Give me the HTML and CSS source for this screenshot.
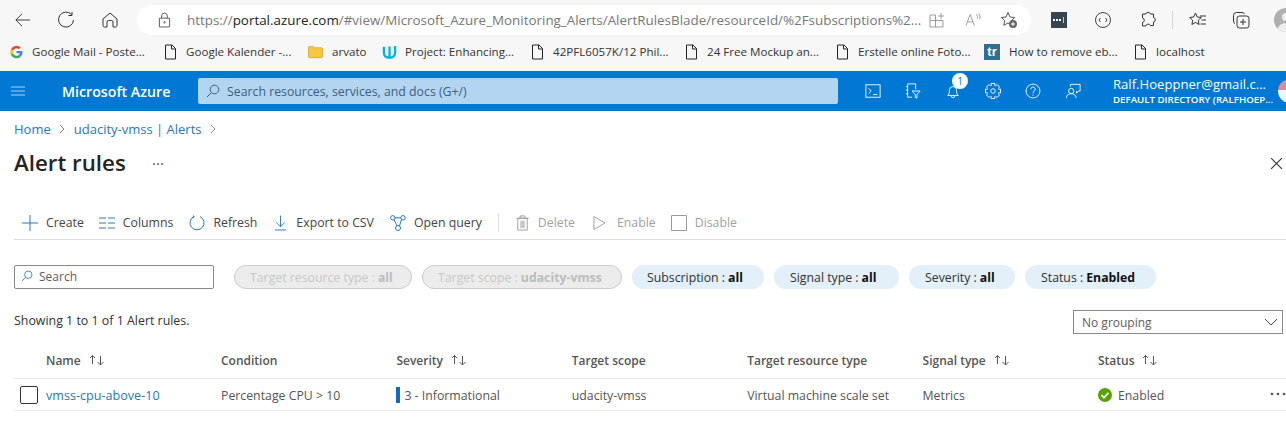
FILE: index.html
```html
<!DOCTYPE html>
<html lang="en">
<head>
<meta charset="utf-8">
<title>Alert rules</title>
<link rel="stylesheet" href="styles.css">
</head>
<body>
<div class="browser">
  <div class="navbar">
    <svg class="nav-ico back" viewBox="0 0 18 16"><path d="M17 8H2M8.500 1.500 2 8l6.500 6.500"/></svg>
    <svg class="nav-ico reload" viewBox="0 0 18 18"><path d="M14.500 3.500A7.500 7.500 0 1 0 16.500 9M15 1v3.500h-3.700"/></svg>
    <svg class="nav-ico home" viewBox="0 0 18 18"><path d="M2 8 9 2l7 6v6.500a1.500 1.500 0 0 1-1.500 1.500H12v-5a1.500 1.500 0 0 0-1.500-1.500h-3A1.500 1.500 0 0 0 6 11v5H3.500A1.500 1.500 0 0 1 2 14.500z"/></svg>
    <div class="addr">
      <svg class="nav-ico lock" viewBox="0 0 14 17"><path d="M1.500 6.500h11v9.500h-11zM4 6.500V4a3 3 0 0 1 6 0v2.500"/><circle cx="7" cy="11" r=".8"/></svg>
      <div class="url">https://<b>portal.azure.com</b>/#view/Microsoft_Azure_Monitoring_Alerts/AlertRulesBlade/resourceId/%2Fsubscriptions%2...</div>
      <svg class="nav-ico grey apps" viewBox="0 0 16 16"><path d="M1 3h5.500v5.500H1zM1 8.500h5.500V15H1zM6.500 8.500H14V15H6.500zM9 4h6M12 1v6"/></svg>
      <svg class="nav-ico grey read" viewBox="0 0 18 16"><path d="M1 14 5.500 2 10 14M2.700 10h5.600M12 2q2 2 1 4.500M14.500 1q2.500 3 1 6"/></svg>
      <svg class="nav-ico fav" viewBox="0 0 18 18"><path d="M8 1.500 10 6l4.700.5-3.500 3.200 1 4.600L8 12l-4.200 2.300 1-4.600L1.300 6.500 6 6z"/><circle class="solid" cx="13" cy="13" r="4"/><path class="wh" d="M13 11v4M11 13h4"/></svg>
    </div>
    <div class="tools">
      <div class="ext-dark"><i></i><i></i><i></i><u></u></div>
      <svg class="nav-ico code" viewBox="0 0 18 18"><circle cx="9" cy="9" r="7.500"/><path d="M6.500 7 5 9l1.500 2M11.500 7 13 9l-1.500 2"/></svg>
      <svg class="nav-ico puzzle" viewBox="0 0 18 18"><path d="M7 3a2.200 2.200 0 0 1 4.300 0h3.200v3.500a2.300 2.300 0 0 1 0 4.500v3.500h-3.300a2.300 2.300 0 0 0-4.400.500H3.500v-3.500a2.300 2.300 0 0 0 0-4.500V3z"/></svg>
      <span class="sep"></span>
      <svg class="nav-ico favs" viewBox="0 0 18 18"><path d="M6.500 2 8.300 6l4 .5-3 2.800.8 4.200-3.600-2.100-3.600 2.100.8-4.200-3-2.800 4-.5zM11 5h6M12.500 9H17M11.500 13H17"/></svg>
      <svg class="nav-ico coll" viewBox="0 0 18 18"><path d="M3 12.500Q1.500 12 1.500 10V4.500a3 3 0 0 1 3-3H10q2 0 2.500 1.500"/><rect x="5" y="5" width="12" height="12" rx="2.500"/><path d="M11 8v6M8 11h6"/></svg>
      <div class="avatar"><span class="head"></span><span class="torso"></span></div>
    </div>
  </div>
  <div class="bookmarks">
    <div class="bm"><svg class="bm-ico g" viewBox="0 0 48 48"><path fill="#ea4335" d="M24 10c3.400 0 6.400 1.200 8.800 3.400l6.500-6.500A23 23 0 0 0 3.500 13.600l7.600 5.900A14 14 0 0 1 24 10z"/><path fill="#4285f4" d="M46 24.500c0-1.600-.2-3.100-.4-4.500H24v9h12.400a10.600 10.600 0 0 1-4.600 7l7.400 5.700C43.500 37.700 46 31.700 46 24.500z"/><path fill="#fbbc05" d="M11.100 28.500a14 14 0 0 1 0-9l-7.600-5.900a23 23 0 0 0 0 20.800z"/><path fill="#34a853" d="M24 47c6.200 0 11.400-2 15.200-5.500L31.800 36a14 14 0 0 1-20.700-7.500l-7.600 5.900A23 23 0 0 0 24 47z"/></svg><span>Google Mail - Poste...</span></div>
    <div class="bm"><svg class="bm-ico page" viewBox="0 0 12 16"><path d="M1 1h6.500L11 4.500V15H1zM7 1v4h4"/></svg><span>Google Kalender -...</span></div>
    <div class="bm"><svg class="bm-ico" viewBox="0 0 16 14"><path fill="#f5c842" stroke="#c99a1c" stroke-width=".7" d="M.5 2a1 1 0 0 1 1-1h4l1.500 1.500h7.500a1 1 0 0 1 1 1V12a1 1 0 0 1-1 1h-13a1 1 0 0 1-1-1z"/></svg><span>arvato</span></div>
    <div class="bm"><svg class="bm-ico" viewBox="0 0 16 16"><path fill="none" stroke="#02b3e4" stroke-width="2.400" d="M2 2.500v6q0 5.500 6 5.500t6-5.500v-7M8 14V2"/></svg><span>Project: Enhancing...</span></div>
    <div class="bm"><svg class="bm-ico page" viewBox="0 0 12 16"><path d="M1 1h6.500L11 4.500V15H1zM7 1v4h4"/></svg><span>42PFL6057K/12 Phil...</span></div>
    <div class="bm"><svg class="bm-ico page" viewBox="0 0 12 16"><path d="M1 1h6.500L11 4.500V15H1zM7 1v4h4"/></svg><span>24 Free Mockup an...</span></div>
    <div class="bm"><svg class="bm-ico page" viewBox="0 0 12 16"><path d="M1 1h6.500L11 4.500V15H1zM7 1v4h4"/></svg><span>Erstelle online Foto...</span></div>
    <div class="bm"><span class="tr">tr</span><span>How to remove eb...</span></div>
    <div class="bm"><svg class="bm-ico page" viewBox="0 0 12 16"><path d="M1 1h6.500L11 4.500V15H1zM7 1v4h4"/></svg><span>localhost</span></div>
  </div>
</div>

<header class="azure">
  <svg class="burger" viewBox="0 0 14 10"><path d="M0 1h14M0 5h14M0 9h14"/></svg>
  <div class="brand">Microsoft Azure</div>
  <div class="global-search">
    <svg class="search-ico" viewBox="0 0 14 14"><circle cx="8.500" cy="5.500" r="4.300"/><path d="M5.500 8.500 1 13"/></svg>
    <span>Search resources, services, and docs (G+/)</span>
  </div>
  <div class="az-tools">
    <svg class="az-ico" viewBox="0 0 18 18"><rect x="1" y="2" width="16" height="14"/><path d="M4 6l3 3-3 3M9 13h5"/></svg>
    <svg class="az-ico" viewBox="0 0 18 18"><path d="M3 1h9v6M3 1v15h5M1 4h2M1 8h2M1 12h2M8 9h9l-3.500 4v4l-2-1v-3z"/></svg>
    <div class="bell"><svg class="az-ico" viewBox="0 0 18 18"><path d="M3 14h12q-2-1.500-2-4V8a4 4 0 0 0-8 0v2q0 2.500-2 4zM7 14.500a2 2 0 0 0 4 0"/></svg><span class="badge">1</span></div>
    <svg class="az-ico" viewBox="0 0 18 18"><rect x="7" y=".6" width="4" height="16.800"/><rect x="7" y=".6" width="4" height="16.800" transform="rotate(45 9 9)"/><rect x="7" y=".6" width="4" height="16.800" transform="rotate(90 9 9)"/><rect x="7" y=".6" width="4" height="16.800" transform="rotate(135 9 9)"/><circle class="gear" cx="9" cy="9" r="6.300"/><circle cx="9" cy="9" r="2.600"/></svg>
    <svg class="az-ico" viewBox="0 0 18 18"><circle cx="9" cy="9" r="7.800"/><path d="M6.500 7a2.500 2.500 0 1 1 3.500 2.300Q9 10 9 11.500M9 13v1.200"/></svg>
    <svg class="az-ico" viewBox="0 0 18 18"><circle cx="7" cy="9" r="3"/><path d="M1.500 17q.5-5 5.500-5t5.500 5M6 4V1.500h11V9h-2l-2 2.500V9"/></svg>
  </div>
  <div class="account">
    <div class="acc-name">Ralf.Hoeppner@gmail.c...</div>
    <div class="acc-dir">DEFAULT DIRECTORY (RALFHOEP...</div>
  </div>
  <div class="acc-pic"></div>
</header>

<main class="blade">
  <nav class="crumbs">
    <a>Home</a>
    <svg class="chev" viewBox="0 0 6 10"><path d="M1 1l4 4-4 4"/></svg>
    <a>udacity-vmss | Alerts</a>
    <svg class="chev" viewBox="0 0 6 10"><path d="M1 1l4 4-4 4"/></svg>
  </nav>
  <div class="title-row">
    <h1>Alert rules</h1>
    <span class="title-more">···</span>
    <svg class="close" viewBox="0 0 12 12"><path d="M1 1l10 10M11 1 1 11"/></svg>
  </div>
  <div class="toolbar">
    <div class="cmd c-create"><svg class="c-ico" viewBox="0 0 16 16"><path d="M8 0v16M0 8h16"/></svg><span>Create</span></div>
    <div class="cmd"><svg class="c-ico" viewBox="0 0 16 12"><path d="M0 1h7M9 1h7M0 6h7M9 6h7M0 11h7M9 11h7"/></svg><span>Columns</span></div>
    <div class="cmd c-refresh"><svg class="c-ico" viewBox="0 0 16 16"><path d="M5 1.500a7 7 0 1 0 6 0M4.500 .5 5.200 2 3 3"/></svg><span>Refresh</span></div>
    <div class="cmd nar"><svg class="c-ico" viewBox="0 0 14 16"><path d="M7 0v12M2.500 7.500 7 12l4.500-4.500M1 15.500h12"/></svg><span>Export to CSV</span></div>
    <div class="cmd"><svg class="c-ico" viewBox="0 0 16 16"><circle cx="2.800" cy="2.800" r="2.200"/><circle cx="13" cy="2.800" r="2.200"/><circle cx="8" cy="13" r="2.500"/><path d="M5 2.800h5.800M4 4.500l3 6.300M11.500 4.500 9.500 11"/></svg><span>Open query</span></div>
    <span class="tb-sep"></span>
    <div class="cmd off nar c-delete"><svg class="c-ico" viewBox="0 0 13 17"><path d="M1.500 3.500h10V16h-10zM0 3.500h13M4 3.500V1h5v2.500"/><path class="fill" d="M4 6h5v8H4z"/></svg><span>Delete</span></div>
    <div class="cmd off nar play"><svg class="c-ico" viewBox="0 0 14 16"><path d="M1 1v14l12-7z"/></svg><span>Enable</span></div>
    <div class="cmd off"><svg class="c-ico" viewBox="0 0 16 16"><path d="M.5.500h15v15H.5z"/></svg><span>Disable</span></div>
  </div>
  <div class="filters">
    <div class="search-box">
      <svg class="s-ico" viewBox="0 0 14 14"><circle cx="8.500" cy="5.500" r="4.300"/><path d="M5.500 8.500 1 13"/></svg>
      <span>Search</span>
    </div>
    <div class="pill dis first">Target resource type : <b>all</b></div>
    <div class="pill dis">Target scope : <b>udacity-vmss</b></div>
    <div class="pill p-sub">Subscription : <b>all</b></div>
    <div class="pill p-sig">Signal type : <b>all</b></div>
    <div class="pill p-sev">Severity : <b>all</b></div>
    <div class="pill p-sta">Status : <b>Enabled</b></div>
  </div>
  <div class="summary">
    <span>Showing 1 to 1 of 1 Alert rules.</span>
    <div class="select"><span>No grouping</span><svg class="sel-chev" viewBox="0 0 14 8"><path d="M1 1l6 6 6-6"/></svg></div>
  </div>
  <div class="grid head-row">
    <div class="cell name">Name <svg class="sort" viewBox="0 0 17 12"><path d="M4.500 10V1.500M2 4l2.500-2.500L7 4M12.500 2v9M9.500 8l3 3 3-3"/></svg></div>
    <div class="cell">Condition</div>
    <div class="cell">Severity <svg class="sort" viewBox="0 0 17 12"><path d="M4.500 10V1.500M2 4l2.500-2.500L7 4M12.500 2v9M9.500 8l3 3 3-3"/></svg></div>
    <div class="cell">Target scope</div>
    <div class="cell">Target resource type</div>
    <div class="cell">Signal type <svg class="sort" viewBox="0 0 17 12"><path d="M4.500 10V1.500M2 4l2.500-2.500L7 4M12.500 2v9M9.500 8l3 3 3-3"/></svg></div>
    <div class="cell">Status <svg class="sort" viewBox="0 0 17 12"><path d="M4.500 10V1.500M2 4l2.500-2.500L7 4M12.500 2v9M9.500 8l3 3 3-3"/></svg></div>
  </div>
  <div class="grid data-row">
    <div class="cell name"><span class="check"></span><a>vmss-cpu-above-10</a></div>
    <div class="cell">Percentage CPU &gt; 10</div>
    <div class="cell"><span class="sev"></span>3 - Informational</div>
    <div class="cell">udacity-vmss</div>
    <div class="cell">Virtual machine scale set</div>
    <div class="cell">Metrics</div>
    <div class="cell"><svg class="ok" viewBox="0 0 14 14"><circle cx="7" cy="7" r="7"/><path d="M3.500 7.200 6 9.700l4.500-5"/></svg>Enabled</div>
    <svg class="row-more" viewBox="0 0 16 4"><circle cx="2" cy="2" r="1.300"/><circle cx="8" cy="2" r="1.300"/><circle cx="14" cy="2" r="1.300"/></svg>
  </div>
</main>
</body>
</html>
```
FILE: styles.css
```css
* { box-sizing: border-box; }
html, body { margin: 0; height: 430px; overflow: hidden; }
body { width: 1286px; background: #fff; font-family: "Open Sans", "Noto Sans", sans-serif; font-size: 12.3px; color: #323130; }
svg { flex: none; fill: none; stroke-width: 1; }
a { color: #0f6cbd; }

.browser { height: 71px; background: #f7f7f7; }
.navbar { height: 35px; display: flex; align-items: center; padding: 4px 0 0 14px; overflow: hidden; }
.nav-ico { stroke: #333; width: 18px; height: 18px; }
.back { width: 17px; height: 16px; margin-right: 26px; }
.reload { margin-right: 26px; }
.home { margin-right: 18px; }
.addr { flex: none; width: 894px; height: 30px; border-radius: 15px; background: #fff; display: flex; align-items: center; padding: 0 14px 0 21px; }
.lock { width: 13px; height: 16px; stroke: #555; margin-right: 16px; }
.url { flex: none; width: 735px; font-size: 13.4px; color: #777; white-space: nowrap; }
.url b { font-weight: 400; color: #222; }
.grey { stroke: #999; }
.apps { width: 16px; height: 16px; margin-left: 7px; margin-right: 20px; }
.read { width: 17px; height: 16px; margin-right: 18px; }
.fav { stroke: #555; }
.fav .solid { fill: #666; stroke: none; }
.fav .wh { stroke: #fff; }
.tools { flex: none; display: flex; align-items: center; margin-left: 20px; }
.ext-dark { width: 16px; height: 16px; background: #36454f; display: flex; align-items: center; gap: 1px; padding-left: 2px; }
.ext-dark i { width: 2px; height: 2px; background: #fff; }
.ext-dark u { width: 1px; height: 6px; background: #ccd; margin-left: 1px; }
.code { margin-left: 27px; stroke: #444; }
.puzzle { margin-left: 27px; }
.sep { flex: none; width: 1px; height: 18px; background: #d6d6d6; margin: 0 16px 0 15px; }
.coll { margin-left: 25px; }
.avatar { width: 24px; height: 24px; margin-left: 24px; flex: none; border-radius: 50%; background: #b0b0b0; position: relative; overflow: hidden; }
.head { position: absolute; left: 8px; top: 5px; width: 8px; height: 8px; border-radius: 50%; background: #eee; }
.torso { position: absolute; left: 4px; top: 15px; width: 16px; height: 12px; border-radius: 50%; background: #eee; }

.bookmarks { height: 36px; display: flex; align-items: center; padding-left: 10px; font-size: 11.6px; color: #333; padding-bottom: 3px; }
.bm { flex: none; display: flex; align-items: center; gap: 9px; white-space: nowrap; }
.bm:nth-child(1) { width: 154px; }
.bm:nth-child(2) { width: 144px; }
.bm:nth-child(3) { width: 74px; }
.bm:nth-child(4) { width: 149px; gap: 8px; }
.bm:nth-child(5) { width: 154px; }
.bm:nth-child(6) { width: 151px; }
.bm:nth-child(7) { width: 148px; }
.bm:nth-child(8) { width: 150px; }
.bm-ico { width: 15px; height: 16px; }
.g { width: 13px; }
.page { width: 13px; stroke: #222; }
.tr { width: 16px; height: 16px; background: #2f6f8f; color: #fff; font: 700 13px/15px "Liberation Sans", sans-serif; text-align: center; }

.azure { height: 40px; background: #0078d4; color: #fff; display: flex; align-items: center; overflow: hidden; }
.burger { width: 14px; height: 10px; margin-left: 11px; stroke: #a8d4f5; stroke-width: 1; }
.brand { flex: none; width: 136px; margin-left: 37px; font-size: 14.2px; font-weight: 600; white-space: nowrap; }
.global-search { flex: none; width: 640px; height: 26px; background: #b3d5f2; border-radius: 2px; display: flex; align-items: center; padding-left: 8px; gap: 7px; color: #3e5f7a; }
.search-ico { width: 14px; height: 14px; stroke: #3e5f7a; }
.az-tools { flex: none; display: flex; align-items: center; width: 275px; gap: 24px; padding-left: 27px; }
.az-ico { width: 16px; height: 16px; stroke: #fff; }
.gear { fill: #0078d4; stroke: none; }
.bell { position: relative; display: flex; }
.badge { position: absolute; left: 7px; top: -10px; width: 16px; height: 16px; border-radius: 50%; background: #fff; color: #0078d4; font-size: 10px; line-height: 16px; text-align: center; }
.account { flex: none; width: 165px; white-space: nowrap; }
.acc-name { font-size: 13.1px; line-height: 16px; }
.acc-dir { font-size: 9.7px; line-height: 13px; font-weight: 600; margin-top: 1px; }
.acc-pic { width: 24px; height: 24px; border-radius: 50%; background: linear-gradient(#e08a96 45%, #f4f4f4 45%); flex: none; }

.blade { padding: 0 0 0 14px; }
.crumbs { height: 37px; display: flex; align-items: center; gap: 8.500px; font-size: 13px; padding-bottom: 2px; }
.crumbs a { color: #2a76ba; }
.chev { width: 6px; height: 10px; stroke: #888; }
.title-row { height: 30px; display: flex; align-items: center; }
h1 { margin: 0; width: 138px; font-size: 22.3px; font-weight: 600; color: #252423; white-space: nowrap; line-height: 30px; }
.title-more { color: #555; font-size: 15px; }
.close { width: 13px; height: 13px; stroke: #333; margin-left: auto; margin-right: 3px; }

.toolbar { height: 61px; margin-top: 1px; padding: 27px 0 0 8px; display: flex; align-items: center; border-bottom: 1px solid #ddd; color: #444; }
.cmd { display: flex; align-items: center; gap: 8px; margin-right: 16px; white-space: nowrap; }
.c-create { margin-right: 15px; }
.c-refresh { margin-right: 17px; }
.nar { gap: 9px; }
.nar .c-ico { width: 13px; }
.play { gap: 11px; margin-right: 15px; }
.c-delete { margin-right: 18px; }
.c-ico { width: 16px; height: 16px; stroke: #2a76ba; }
.off { color: #a19f9d; }
.off .c-ico { stroke: #9a9a9a; }
.off .fill { fill: #c8c8c8; stroke: none; }
.tb-sep { width: 1px; height: 18px; background: #ddd; margin-right: 17px; }

.filters { display: flex; align-items: center; height: 24px; margin-top: 25px; gap: 10px; }
.search-box { width: 200px; height: 24px; border: 1px solid #8a8886; border-radius: 2px; display: flex; align-items: center; gap: 6px; padding: 0 0 2px 6px; color: #605e5c; font-size: 12px; }
.s-ico { width: 12px; height: 12px; stroke: #2a76ba; }
.pill { height: 24px; border-radius: 12px; background: #e3eff9; padding: 0 0 0 16px; display: flex; align-items: center; gap: 3px; white-space: nowrap; }
.pill b { font-weight: 700; color: #111; }
.p-sub { width: 132px; padding-left: 15px; }
.p-sig { width: 125px; }
.p-sev { width: 106px; }
.p-sta { width: 131px; }
.dis { background: #ececec; border: 1px solid #ccc; color: #c8c8c8; padding: 0 19px 0 15px; }
.dis b { color: #bdbdbd; }
.first { width: 178px; margin-left: 10px; }
.first + .dis { width: 200px; }

.summary { height: 42px; margin-top: 21px; margin-right: 3px; display: flex; align-items: flex-start; justify-content: space-between; }
.summary > span { line-height: 20px; margin-top: 1px; font-size: 12.4px; }
.select { width: 210px; height: 24px; border: 1px solid #8a8886; display: flex; align-items: center; justify-content: space-between; padding: 0 4px 0 8px; color: #605e5c; font-size: 12px; }
.sel-chev { width: 14px; height: 8px; stroke: #444; }

.grid { display: grid; grid-template-columns: 207px repeat(6, 175.400px); position: relative; align-items: center; }
.head-row { height: 28px; margin-top: -1px; font-weight: 600; font-size: 12px; color: #555; border-bottom: 1px solid #e6e6e6; padding-bottom: 9px; }
.data-row { height: 32px; border-bottom: 1px solid #eee; color: #555; padding-top: 1px; font-size: 12.3px; }
.cell { display: flex; align-items: center; white-space: nowrap; }
.name { padding-left: 32px; }
.data-row .name { padding-left: 6px; gap: 8px; }
.data-row a { color: #2a76ba; font-size: 12.6px; }
.sort { width: 17px; height: 12px; stroke: #555; margin-left: 7px; }
.check { width: 18px; height: 18px; border: 1px solid #333; border-radius: 2px; background: #fff; flex: none; }
.sev { width: 4px; height: 16px; background: #0f6cb5; margin-right: 4px; }
.ok { width: 14px; height: 14px; margin-right: 6px; }
.ok circle { fill: #57a300; }
.ok path { stroke: #fff; stroke-width: 1.700; }
.row-more { position: absolute; right: 0; top: 13px; width: 16px; height: 4px; fill: #555; }
```
